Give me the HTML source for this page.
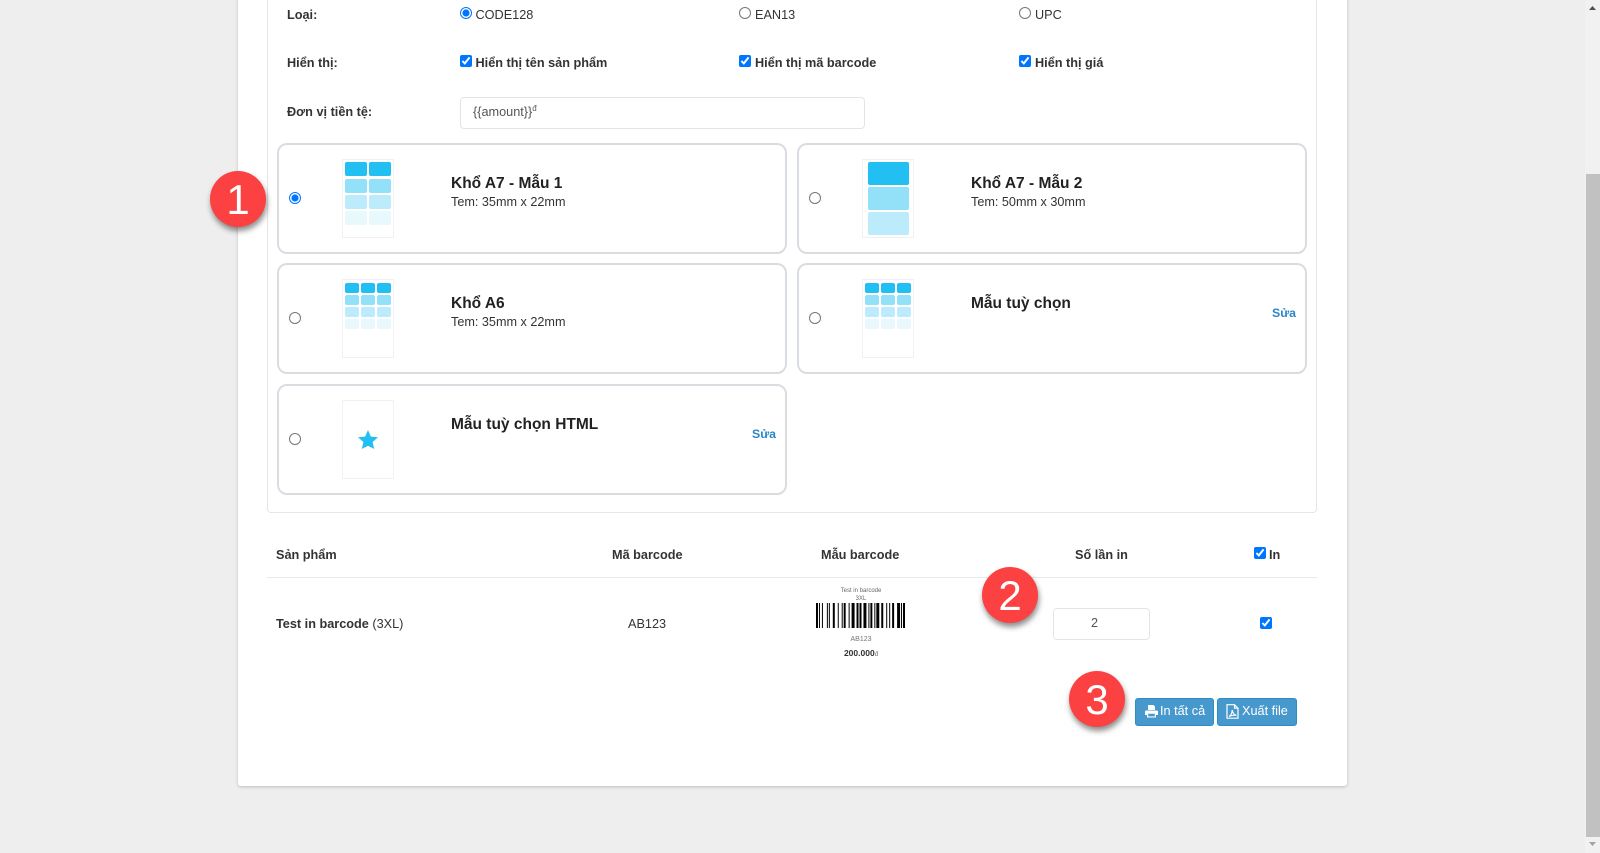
<!DOCTYPE html>
<html lang="vi"><head><meta charset="utf-8"><title>Barcode</title>
<style>
*{box-sizing:border-box}
html,body{margin:0;padding:0;width:1600px;height:853px;overflow:hidden;background:#eee;font-family:"Liberation Sans",sans-serif;font-size:12.7px;color:#333}
.a{position:absolute}
.t{position:absolute;white-space:nowrap;line-height:16px}
.b{font-weight:bold}
input[type=radio],input[type=checkbox]{position:absolute;margin:0;width:12px;height:12px}
#card{left:238px;top:-10px;width:1109px;height:796px;background:#fff;border-radius:3px;box-shadow:0 1px 3px rgba(0,0,0,.2)}
#panel{left:267px;top:-10px;width:1050px;height:523px;border:1px solid #e6e6e6;border-radius:4px}
.tile{position:absolute;width:510px;height:111px;border:2px solid #d9dde1;border-radius:10px;background:#fff}
.thumb{position:absolute;left:63px;top:14px;width:52px;height:79px;border:1px solid #f1f1f1}
.c{position:absolute;border-radius:2px}
.title{position:absolute;left:172px;top:30px;font-size:15.5px;font-weight:bold;line-height:18px;color:#222;white-space:nowrap}
.sub{position:absolute;left:172px;top:49px;font-size:12.65px;line-height:16px;white-space:nowrap}
.edit{position:absolute;left:473px;top:40px;font-size:12.3px;font-weight:bold;color:#2a86c8;line-height:16px}
.btn{position:absolute;top:698px;height:28px;background:#4698cd;border:1px solid #2a8fc9;border-radius:3px;color:#fff;font-size:12.7px;line-height:25px;white-space:nowrap}
.num{position:absolute;width:56px;height:56px;border-radius:50%;background:#fb4141;color:#fff;font-size:42px;line-height:57px;text-align:center;box-shadow:1px 4px 6px rgba(0,0,0,.45)}
.inp{position:absolute;background:#fff;border:1px solid #e2e5e8;border-radius:4px;color:#555}
</style></head><body>
<div class="a" id="card"></div>
<div class="a" id="panel"></div>

<div class="t b" style="left:287px;top:7px">Loại:</div>
<input type="radio" name="k" checked style="left:460px;top:7px"><div class="t" style="left:475.500px;top:7px">CODE128</div>
<input type="radio" name="k" style="left:739px;top:7px"><div class="t" style="left:755px;top:7px">EAN13</div>
<input type="radio" name="k" style="left:1019px;top:7px"><div class="t" style="left:1035px;top:7px">UPC</div>

<div class="t b" style="left:287px;top:55px">Hiển thị:</div>
<input type="checkbox" checked style="left:460px;top:55px"><div class="t b" style="left:475.500px;top:55px">Hiển thị tên sản phẩm</div>
<input type="checkbox" checked style="left:739px;top:55px"><div class="t b" style="left:755px;top:55px">Hiển thị mã barcode</div>
<input type="checkbox" checked style="left:1019px;top:55px"><div class="t b" style="left:1035px;top:55px">Hiển thị giá</div>

<div class="t b" style="left:287px;top:104px">Đơn vị tiền tệ:</div>
<div class="inp" style="left:460px;top:97px;width:405px;height:32px;padding:6px 12px;line-height:17px">{{amount}}<sup style="font-size:8px;line-height:0">đ</sup></div>

<div class="tile" style="left:277px;top:143px">
 <input type="radio" name="m" checked style="left:10px;top:47px">
 <div class="thumb"><div class="c" style="left:2px;top:2px;width:22px;height:14px;background:#22c0f2"></div><div class="c" style="left:26px;top:2px;width:22px;height:14px;background:#22c0f2"></div><div class="c" style="left:2px;top:19px;width:22px;height:14px;background:#93e0f9"></div><div class="c" style="left:26px;top:19px;width:22px;height:14px;background:#93e0f9"></div><div class="c" style="left:2px;top:35px;width:22px;height:14px;background:#bcebfb"></div><div class="c" style="left:26px;top:35px;width:22px;height:14px;background:#bcebfb"></div><div class="c" style="left:2px;top:51px;width:22px;height:14px;background:#e8f8fd"></div><div class="c" style="left:26px;top:51px;width:22px;height:14px;background:#e8f8fd"></div></div>
 <div class="title">Khổ A7 - Mẫu 1</div><div class="sub">Tem: 35mm x 22mm</div>
</div>

<div class="tile" style="left:797px;top:143px">
 <input type="radio" name="m" style="left:10px;top:47px">
 <div class="thumb"><div class="c" style="left:5px;top:2px;width:41px;height:23px;background:#22c0f2"></div><div class="c" style="left:5px;top:27px;width:41px;height:23px;background:#93e0f9"></div><div class="c" style="left:5px;top:52px;width:41px;height:23px;background:#bcebfb"></div></div>
 <div class="title">Khổ A7 - Mẫu 2</div><div class="sub">Tem: 50mm x 30mm</div>
</div>

<div class="tile" style="left:277px;top:263px">
 <input type="radio" name="m" style="left:10px;top:47px">
 <div class="thumb"><div class="c" style="left:2px;top:3px;width:14px;height:10px;background:#22c0f2"></div><div class="c" style="left:18px;top:3px;width:14px;height:10px;background:#22c0f2"></div><div class="c" style="left:34px;top:3px;width:14px;height:10px;background:#22c0f2"></div><div class="c" style="left:2px;top:15px;width:14px;height:10px;background:#93e0f9"></div><div class="c" style="left:18px;top:15px;width:14px;height:10px;background:#93e0f9"></div><div class="c" style="left:34px;top:15px;width:14px;height:10px;background:#93e0f9"></div><div class="c" style="left:2px;top:27px;width:14px;height:10px;background:#bcebfb"></div><div class="c" style="left:18px;top:27px;width:14px;height:10px;background:#bcebfb"></div><div class="c" style="left:34px;top:27px;width:14px;height:10px;background:#bcebfb"></div><div class="c" style="left:2px;top:39px;width:14px;height:10px;background:#e8f8fd"></div><div class="c" style="left:18px;top:39px;width:14px;height:10px;background:#e8f8fd"></div><div class="c" style="left:34px;top:39px;width:14px;height:10px;background:#e8f8fd"></div></div>
 <div class="title">Khổ A6</div><div class="sub">Tem: 35mm x 22mm</div>
</div>

<div class="tile" style="left:797px;top:263px">
 <input type="radio" name="m" style="left:10px;top:47px">
 <div class="thumb"><div class="c" style="left:2px;top:3px;width:14px;height:10px;background:#22c0f2"></div><div class="c" style="left:18px;top:3px;width:14px;height:10px;background:#22c0f2"></div><div class="c" style="left:34px;top:3px;width:14px;height:10px;background:#22c0f2"></div><div class="c" style="left:2px;top:15px;width:14px;height:10px;background:#93e0f9"></div><div class="c" style="left:18px;top:15px;width:14px;height:10px;background:#93e0f9"></div><div class="c" style="left:34px;top:15px;width:14px;height:10px;background:#93e0f9"></div><div class="c" style="left:2px;top:27px;width:14px;height:10px;background:#bcebfb"></div><div class="c" style="left:18px;top:27px;width:14px;height:10px;background:#bcebfb"></div><div class="c" style="left:34px;top:27px;width:14px;height:10px;background:#bcebfb"></div><div class="c" style="left:2px;top:39px;width:14px;height:10px;background:#e8f8fd"></div><div class="c" style="left:18px;top:39px;width:14px;height:10px;background:#e8f8fd"></div><div class="c" style="left:34px;top:39px;width:14px;height:10px;background:#e8f8fd"></div></div>
 <div class="title">Mẫu tuỳ chọn</div><div class="edit">Sửa</div>
</div>

<div class="tile" style="left:277px;top:384px">
 <input type="radio" name="m" style="left:10px;top:47px">
 <div class="thumb"><svg class="a" style="left:15px;top:29px" width="20" height="20" viewBox="0 0 20 20"><path fill="#22c0f2" d="M10 0l2.900 6.600 7.100.7-5.400 4.700 1.600 7L10 15.800l-6.200 3.200 1.600-7L0 7.300l7.100-.7z"/></svg></div>
 <div class="title">Mẫu tuỳ chọn HTML</div><div class="edit">Sửa</div>
</div>

<div class="t b" style="left:276px;top:547px">Sản phẩm</div>
<div class="t b" style="left:612px;top:547px">Mã barcode</div>
<div class="t b" style="left:821px;top:547px">Mẫu barcode</div>
<div class="t b" style="left:1075px;top:547px">Số lần in</div>
<input type="checkbox" checked style="left:1254px;top:547px"><div class="t b" style="left:1269px;top:547px">In</div>
<div class="a" style="left:267px;top:577px;width:1050px;height:1px;background:#e8e8e8"></div>

<div class="t" style="left:276px;top:616px"><span class="b">Test in barcode</span> (3XL)</div>
<div class="t" style="left:628px;top:616px">AB123</div>

<div class="t" style="left:816px;top:587px;width:90px;text-align:center;font-size:6px;line-height:9px;color:#666">Test in barcode</div>
<div class="t" style="left:816px;top:595px;width:90px;text-align:center;font-size:6px;line-height:9px;color:#666">3XL</div>
<svg class="a" style="left:816px;top:603px" width="89" height="25" viewBox="0 0 90 25" preserveAspectRatio="none"><path fill="#000" d="M0 0h2v25h-2zM3 0h1v25h-1zM6 0h1v25h-1zM11 0h1v25h-1zM13 0h1v25h-1zM17 0h2v25h-2zM22 0h1v25h-1zM26 0h1v25h-1zM28 0h2v25h-2zM33 0h1v25h-1zM36 0h3v25h-3zM41 0h2v25h-2zM44 0h2v25h-2zM48 0h3v25h-3zM53 0h1v25h-1zM55 0h2v25h-2zM59 0h1v25h-1zM61 0h3v25h-3zM66 0h2v25h-2zM71 0h1v25h-1zM74 0h1v25h-1zM77 0h2v25h-2zM82 0h3v25h-3zM86 0h1v25h-1zM88 0h2v25h-2z"/></svg>
<div class="t" style="left:816px;top:635px;width:90px;text-align:center;font-size:7px;line-height:10px;color:#777">AB123</div>
<div class="t b" style="left:816px;top:648px;width:90px;text-align:center;font-size:8.500px;line-height:10px">200.000<span style="font-size:6px;font-weight:normal;color:#666">đ</span></div>

<div class="inp" style="left:1053px;top:608px;width:97px;height:32px;text-align:center;line-height:29px;padding-right:14px">2</div>
<input type="checkbox" checked style="left:1260px;top:617px">

<div class="btn" style="left:1135px;width:79px;padding-left:9px"><svg class="a" style="left:9px;top:6px" width="13" height="13" viewBox="0 0 13 13"><path fill="#fff" d="M3 0h5.500L10 1.500V5H3zM1.200 5.500h10.600c.7 0 1.200.5 1.200 1.200V10h-2v2.500H2V10H0V6.700c0-.7.500-1.200 1.200-1.200zM3.200 8.800v2.600h6.600V8.800z"/></svg><span style="margin-left:15px">In tất cả</span></div>
<div class="btn" style="left:1217px;width:80px;padding-left:9px"><svg class="a" style="left:8px;top:5px" width="13" height="15" viewBox="0 0 13 15"><path fill="none" stroke="#fff" stroke-width="1.200" d="M1 .7h7.500L12 4.200v10H1zM8.500.7v3.500H12M3 12.500c2-1 3-3.500 3.200-6.500.5 3 2 5 4.300 5.300-2.500-.3-5 0-7.500 1.200z"/></svg><span style="margin-left:15px">Xuất file</span></div>

<div class="num" style="left:210px;top:171px">1</div>
<div class="num" style="left:982px;top:567px">2</div>
<div class="num" style="left:1069px;top:671px">3</div>

<div class="a" style="left:1585px;top:0;width:15px;height:853px;background:#f1f1f1"></div>
<div class="a" style="left:1586px;top:174px;width:14px;height:663px;background:#c1c1c1"></div>
<svg class="a" style="left:1588px;top:5px" width="9" height="7" viewBox="0 0 9 7"><path fill="#505050" d="M4.500 1L8 5H1z"/></svg>
<svg class="a" style="left:1588px;top:841px" width="9" height="7" viewBox="0 0 9 7"><path fill="#a3a3a3" d="M1 1h7L4.500 5z"/></svg>
</body></html>
